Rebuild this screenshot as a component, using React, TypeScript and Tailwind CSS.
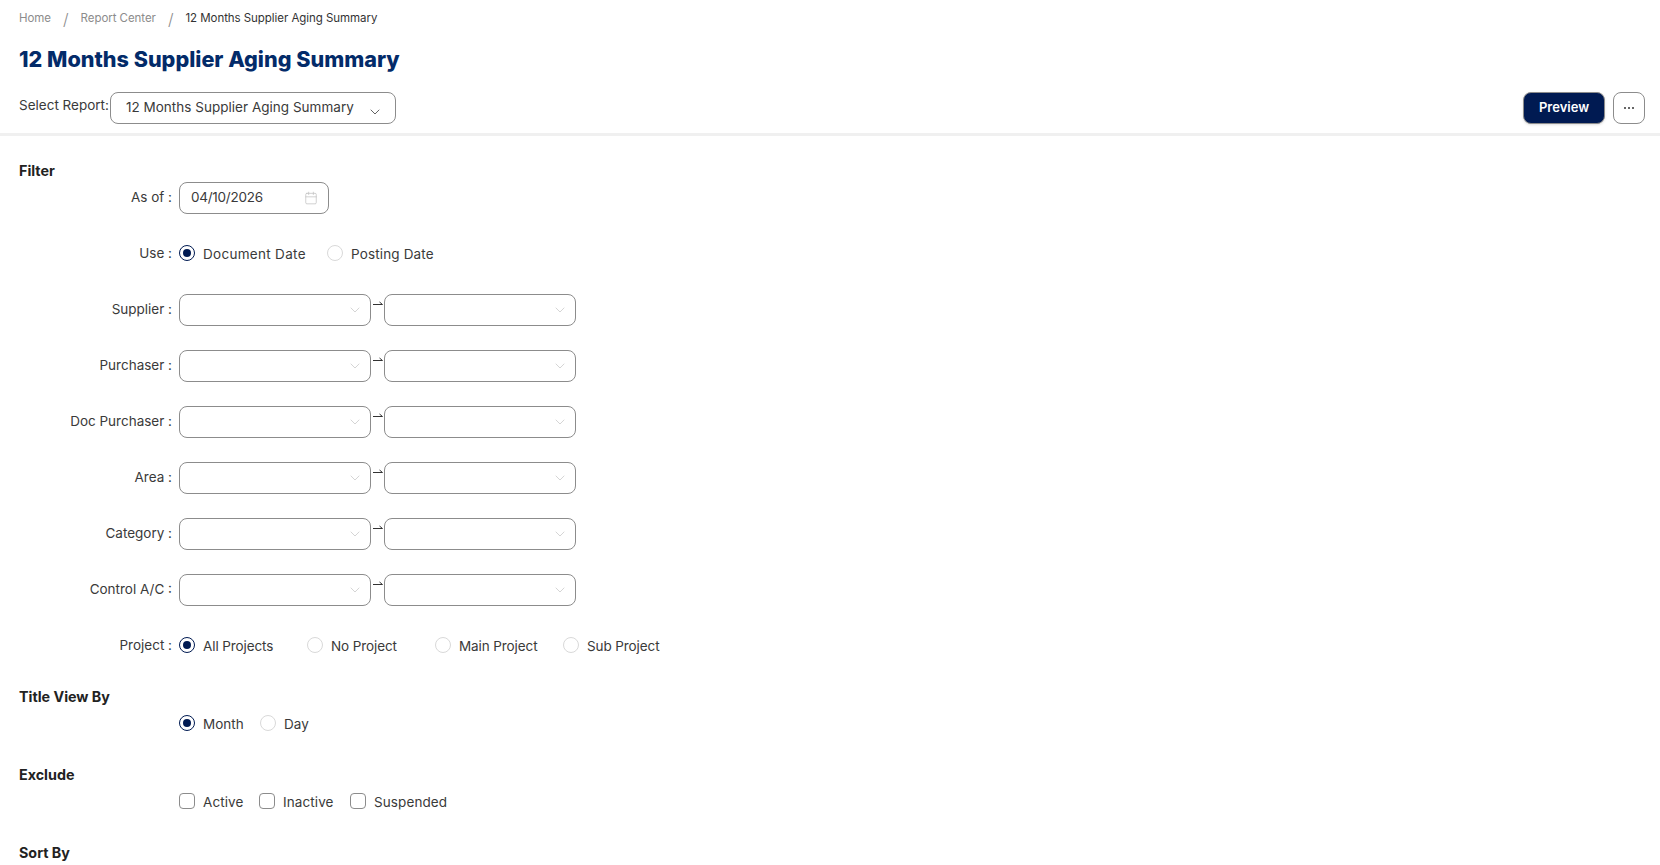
import { ChevronDown, Calendar } from "lucide-react";

const font = { fontFamily: "Inter, 'Liberation Sans', sans-serif" };

function Radio({ label, checked, itemClass, textClass }: { label: string; checked?: boolean; itemClass: string; textClass: string }) {
  return (
    <div className={`flex -translate-y-px items-center ${itemClass}`}>
      <span
        className={
          checked
            ? "flex h-4 w-4 items-center justify-center rounded-full border border-[#001a52] bg-white"
            : "h-4 w-4 rounded-full border border-[#d9d9d9] bg-white"
        }
      >
        {checked && <span className="h-2 w-2 rounded-full bg-[#001a52]" />}
      </span>
      <span className={`ml-2 translate-y-px text-[13.5px] text-[#3a3a3a] ${textClass}`}>{label}</span>
    </div>
  );
}

function Check({ label, itemClass }: { label: string; itemClass: string }) {
  return (
    <div className={`flex -translate-y-px items-center ${itemClass}`}>
      <span className="h-4 w-4 rounded-[4px] border border-[#8c8c8c] bg-white" />
      <span className="ml-2 translate-y-px text-[13.5px] tracking-[0.1px] text-[#3a3a3a]">{label}</span>
    </div>
  );
}

function Label({ text }: { text: string }) {
  return (
    <span className="w-[172px] -translate-y-px text-right text-[13.5px] text-[#3a3a3a]">{text}</span>
  );
}

function Box() {
  return (
    <div className="flex h-8 w-[192px] items-center justify-end rounded-lg border border-[#8c8c8c] bg-white pr-[7px]">
      <ChevronDown className="h-4 w-4 text-[#bfbfbf]" strokeWidth={1} />
    </div>
  );
}

function Harpoon() {
  return (
    <svg width="13" height="12" viewBox="0 0 13 12" fill="none" stroke="#333" strokeWidth="1" className="mt-[2px] shrink-0">
      <path d="M2 8.5H11.5M11.5 8.5L8.5 6" />
    </svg>
  );
}

function RangeRow({ label }: { label: string }) {
  return (
    <div className="flex h-8 items-center">
      <Label text={label} />
      <div className="ml-[7px] flex items-start">
        <Box />
        <Harpoon />
        <Box />
      </div>
    </div>
  );
}

export default function App() {
  return (
    <div className="h-[865px] w-[1660px] overflow-hidden bg-white" style={font}>
      <header className="h-[136px] border-b-[3px] border-[#f0f0f0] px-[19px] pt-[11px]">
        <nav className="flex h-4 items-center text-[11.5px] tracking-[-0.05px]">
          <span className="text-[#8c8c8c]">Home</span>
          <span className="mx-3 text-[16px] font-light text-[#8c8c8c]">/</span>
          <span className="text-[#8c8c8c]">Report Center</span>
          <span className="mx-3 text-[16px] font-light text-[#8c8c8c]">/</span>
          <span className="text-[#333]">12 Months Supplier Aging Summary</span>
        </nav>
        <h1 className="mt-4 text-[21.6px] leading-8 font-extrabold text-[#032b69]">12 Months Supplier Aging Summary</h1>
        <div className="mt-[17px] flex items-center justify-between">
          <div className="flex items-center">
            <span className="mr-[1px] -translate-y-[3px] text-[13.5px] text-[#3a3a3a]">Select Report:</span>
            <div className="flex h-8 w-[286px] items-center justify-between rounded-lg border border-[#8c8c8c] bg-white pr-[12px] pl-[15px]">
              <span className="-translate-y-px text-[13.5px] tracking-[0.02px] text-[#3a3a3a]">12 Months Supplier Aging Summary</span>
              <ChevronDown className="mt-2 h-4 w-4 text-[#444]" strokeWidth={1.25} />
            </div>
          </div>
          <div className="mr-[-4px] flex items-center gap-2">
            <button className="h-[32px] w-[82px] rounded-lg border border-[#8c8c8c] bg-[#001a52] text-[13px] font-semibold text-white shadow-sm">Preview</button>
            <button className="flex h-8 w-8 items-center justify-center gap-[2px] rounded-lg border border-[#8c8c8c] bg-white">
              <span className="h-[2px] w-[2px] rounded-full bg-[#333]" />
              <span className="h-[2px] w-[2px] rounded-full bg-[#333]" />
              <span className="h-[2px] w-[2px] rounded-full bg-[#333]" />
            </button>
          </div>
        </div>
      </header>

      <main className="pt-[25px]">
        <h2 className="ml-[19px] text-[14.3px] leading-5 font-bold text-[#222]">Filter</h2>
        <div className="mt-[1px] flex h-8 items-center">
          <Label text="As of :" />
          <div className="ml-[7px] flex h-8 w-[150px] items-center justify-between rounded-lg border border-[#8c8c8c] bg-white pr-[10px] pl-[11px]">
            <span className="-translate-y-px text-[13.5px] tracking-[-0.25px] text-[#3a3a3a]">04/10/2026</span>
            <Calendar className="h-[14px] w-[14px] text-[#bfbfbf]" strokeWidth={1.25} />
          </div>
        </div>
        <div className="mt-[24px] flex h-8 items-center">
          <Label text="Use :" />
          <div className="ml-[7px] flex">
            <Radio label="Document Date" checked itemClass="w-[148px]" textClass="tracking-[0.3px]" />
            <Radio label="Posting Date" itemClass="" textClass="tracking-[0.15px]" />
          </div>
        </div>
        <div className="mt-[24px] flex flex-col gap-6">
          <RangeRow label="Supplier :" />
          <RangeRow label="Purchaser :" />
          <RangeRow label="Doc Purchaser :" />
          <RangeRow label="Area :" />
          <RangeRow label="Category :" />
          <RangeRow label="Control A/C :" />
          <div className="flex h-8 items-center">
            <Label text="Project :" />
            <div className="ml-[7px] flex">
              <Radio label="All Projects" checked itemClass="w-[128px]" textClass="tracking-[-0.1px]" />
              <Radio label="No Project" itemClass="w-[128px]" textClass="tracking-[-0.1px]" />
              <Radio label="Main Project" itemClass="w-[128px]" textClass="tracking-[-0.1px]" />
              <Radio label="Sub Project" itemClass="" textClass="tracking-[-0.1px]" />
            </div>
          </div>
        </div>
        <h2 className="mt-[25px] ml-[19px] text-[14.3px] leading-5 font-bold text-[#222]">Title View By</h2>
        <div className="mt-[1px] ml-[179px] flex h-8 items-center">
          <Radio label="Month" checked itemClass="w-[81px]" textClass="" />
          <Radio label="Day" itemClass="" textClass="" />
        </div>
        <h2 className="mt-[25px] ml-[19px] text-[14.3px] leading-5 font-bold text-[#222]">Exclude</h2>
        <div className="mt-[1px] ml-[179px] flex h-8 items-center">
          <Check label="Active" itemClass="w-[80px]" />
          <Check label="Inactive" itemClass="w-[91px]" />
          <Check label="Suspended" itemClass="" />
        </div>
        <h2 className="mt-[25px] ml-[19px] text-[14.3px] leading-5 font-bold text-[#222]">Sort By</h2>
      </main>
    </div>
  );
}
